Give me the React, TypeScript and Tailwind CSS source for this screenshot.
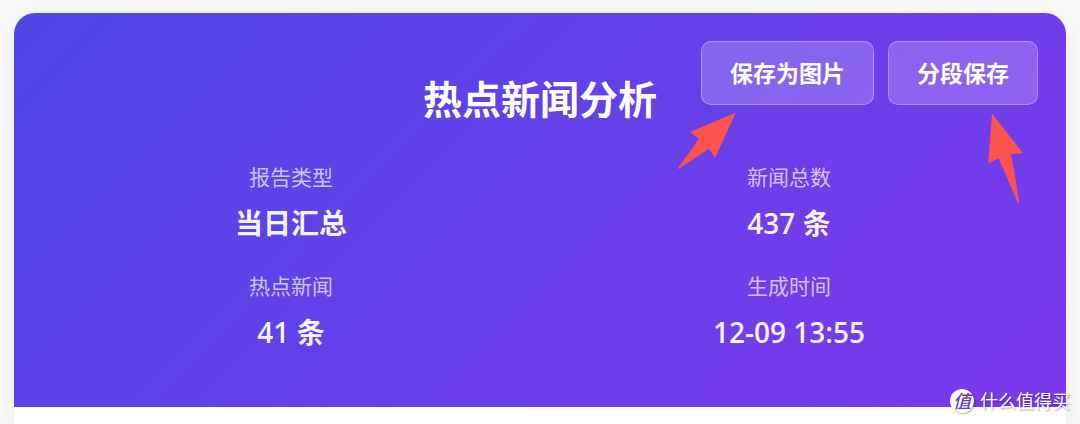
import React from "react";

interface ReportItem {
  label: string;
  value: string;
}

const items: ReportItem[] = [
  { label: "报告类型", value: "当日汇总" },
  { label: "新闻总数", value: "437 条" },
  { label: "热点新闻", value: "41 条" },
  { label: "生成时间", value: "12-09 13:55" },
];

function SaveButton({ children }: { children: React.ReactNode }) {
  return (
    <button
      type="button"
      className="cursor-pointer rounded-[10px] border border-white/30 bg-white/20 px-7 py-3 text-[23px] leading-[38px] font-semibold text-white hover:bg-white/30"
    >
      {children}
    </button>
  );
}

function InfoItem({ label, value }: ReportItem) {
  return (
    <div className="text-center">
      <div className="mb-[7px] text-[21px] leading-[34px] font-normal text-white/70">{label}</div>
      <div className="text-[28px] leading-[45px] font-semibold text-white/95">{value}</div>
    </div>
  );
}

// Red pointers under the save buttons
function Pointers() {
  return (
    <>
      <svg
        className="absolute top-[99px] right-[330px] h-[58px] w-[58px]"
        viewBox="678 112 58 58"
        fill="#fb5350"
        aria-hidden="true"
      >
        <path d="M736 112.6 690 132 699 138.7 678 168 678.6 169 709 148.7 715 158Z" />
      </svg>
      <svg
        className="absolute top-[100px] right-[43px] h-[91px] w-[35px]"
        viewBox="988 113 35 91"
        fill="#fb5350"
        aria-hidden="true"
      >
        <path d="M992 113.6 1022.8 153 1011.3 154.3 1019.4 203 1018 203.2 998.7 158.3 988.2 163.4Z" />
      </svg>
    </>
  );
}

function Watermark() {
  return (
    <div className="absolute right-2.5 bottom-[11px] flex items-center gap-1.5 text-white">
      <span className="flex size-6 items-center justify-center rounded-full bg-white text-[18px] leading-6 font-medium text-[#6a3bc4] italic shadow-[1px_1px_2px_rgba(0,0,0,0.3)]">
        值
      </span>
      <span className="text-[18px] leading-6 [text-shadow:1px_1px_2px_rgba(0,0,0,0.4)]">
        什么值得买
      </span>
    </div>
  );
}

export default function App() {
  return (
    <div className="relative flex min-h-screen flex-col bg-[#fafafa] px-3.5 pt-[13px] font-['Open_Sans','Noto_Sans_CJK_SC',sans-serif]">
      <main className="flex flex-1 flex-col rounded-t-[21px] bg-white shadow-[0_4px_28px_rgba(0,0,0,0.08)]">
        <header className="relative rounded-t-[21px] bg-[linear-gradient(135deg,#4f46e5_0%,#7c3aed_100%)] px-[42px] pt-[55px] pb-[52px] text-white">
          <div className="absolute top-7 right-7 flex gap-3.5">
            <SaveButton>保存为图片</SaveButton>
            <SaveButton>分段保存</SaveButton>
          </div>
          <h1 className="mb-[30px] text-center text-[39px] leading-[62px] font-bold">
            热点新闻分析
          </h1>
          <div className="grid grid-cols-2 gap-x-7 gap-y-[23px]">
            {items.map((item) => (
              <InfoItem key={item.label} label={item.label} value={item.value} />
            ))}
          </div>
          <Pointers />
        </header>
      </main>
      <Watermark />
    </div>
  );
}
